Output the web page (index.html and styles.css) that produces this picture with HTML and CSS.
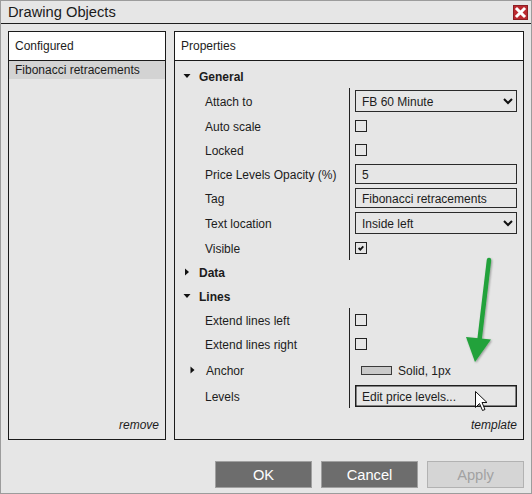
FILE: index.html
```html
<!DOCTYPE html>
<html>
<head>
<meta charset="utf-8">
<link rel="stylesheet" href="styles.css">
</head>
<body>
<div class="window">
  <div class="titlebar">
    <span class="title">Drawing Objects</span>
    <svg class="close" width="15" height="15" viewBox="0 0 15 15">
      <rect x="0.5" y="0.5" width="14" height="14" fill="#bb2a30" stroke="#8c1f24"/>
      <path d="M4 4 L11 11 M11 4 L4 11" stroke="#fff" stroke-width="3" stroke-linecap="square"/>
    </svg>
  </div>
  <div class="content">
    <div class="panels">
      <div class="panel left">
        <div class="panel-head">Configured</div>
        <div class="item selected">Fibonacci retracements</div>
        <div class="panel-foot">remove</div>
      </div>
      <div class="panel right">
        <div class="panel-head">Properties</div>
        <div class="props">
          <div class="ghead"><svg class="tri" width="8" height="8" viewBox="0 0 8 8"><path d="M0.5 2 L7.5 2 L4 6 Z" fill="#111"/></svg><span class="t">General</span></div>
          <div class="group">
            <div class="row h26"><div class="label"><span class="t">Attach to</span></div><div class="value"><div class="box sel"><span class="t">FB 60 Minute</span><svg width="10" height="7" viewBox="0 0 10 7"><path d="M1 1 L5 5 L9 1" fill="none" stroke="#111" stroke-width="2"/></svg></div></div></div>
            <div class="row"><div class="label"><span class="t">Auto scale</span></div><div class="value"><span class="cb"></span></div></div>
            <div class="row"><div class="label"><span class="t">Locked</span></div><div class="value"><span class="cb"></span></div></div>
            <div class="row"><div class="label"><span class="t">Price Levels Opacity (%)</span></div><div class="value"><div class="box inp"><span class="t">5</span></div></div></div>
            <div class="row"><div class="label"><span class="t">Tag</span></div><div class="value"><div class="box inp"><span class="t">Fibonacci retracements</span></div></div></div>
            <div class="row h26"><div class="label"><span class="t">Text location</span></div><div class="value"><div class="box sel"><span class="t">Inside left</span><svg width="10" height="7" viewBox="0 0 10 7"><path d="M1 1 L5 5 L9 1" fill="none" stroke="#111" stroke-width="2"/></svg></div></div></div>
            <div class="row"><div class="label"><span class="t">Visible</span></div><div class="value"><span class="cb"><svg width="10" height="10" viewBox="0 0 10 10"><path d="M2.6 5 L4.3 6.6 L7.3 3.3" fill="none" stroke="#111" stroke-width="1.8"/></svg></span></div></div>
          </div>
          <div class="ghead"><svg class="tri" width="8" height="8" viewBox="0 0 8 8"><path d="M2 0.5 L6 4 L2 7.5 Z" fill="#111"/></svg><span class="t">Data</span></div>
          <div class="ghead"><svg class="tri" width="8" height="8" viewBox="0 0 8 8"><path d="M0.5 2 L7.5 2 L4 6 Z" fill="#111"/></svg><span class="t">Lines</span></div>
          <div class="group">
            <div class="row"><div class="label"><span class="t">Extend lines left</span></div><div class="value"><span class="cb"></span></div></div>
            <div class="row"><div class="label"><span class="t">Extend lines right</span></div><div class="value"><span class="cb"></span></div></div>
            <div class="row h28"><div class="label sub"><svg class="subtri" width="6" height="8" viewBox="0 0 6 8"><path d="M0.5 0.5 L4.5 4 L0.5 7.5 Z" fill="#111"/></svg><span class="t">Anchor</span></div><div class="value"><span class="swatch"></span><span class="t">Solid, 1px</span></div></div>
            <div class="row"><div class="label"><span class="t">Levels</span></div><div class="value"><div class="box btn"><span class="t">Edit price levels...</span></div></div></div>
          </div>
        </div>
        <div class="panel-foot">template</div>
      </div>
    </div>
    <div class="buttons">
      <div class="dbtn">OK</div>
      <div class="dbtn">Cancel</div>
      <div class="dbtn disabled">Apply</div>
    </div>
  </div>
  <svg class="overlay" width="532" height="494" viewBox="0 0 532 494">
    <defs>
      <filter id="soft" x="-20%" y="-20%" width="140%" height="140%">
        <feGaussianBlur in="SourceAlpha" stdDeviation="1.2" result="b"/>
        <feOffset dx="0.5" dy="0.5" result="o"/>
        <feComponentTransfer in="o" result="s"><feFuncA type="linear" slope="0.35"/></feComponentTransfer>
        <feMerge><feMergeNode in="s"/><feMergeNode in="SourceGraphic"/></feMerge>
      </filter>
    </defs>
    <g filter="url(#soft)">
      <path d="M489 260 L479.5 340" stroke="#22a23a" stroke-width="4.5" stroke-linecap="round" fill="none"/>
      <path d="M466 337 L491 339.5 L475 362 Z" fill="#22a23a"/>
    </g>
    <path d="M475.5 391.5 L475.5 407.5 L479.5 403.5 L482.5 410.5 L485 409.5 L482 402.5 L487 402.5 Z" fill="#fff" stroke="#111" stroke-width="1" stroke-linejoin="round"/>
  </svg>
</div>
</body>
</html>
```

FILE: styles.css
```css
html, body {
  margin: 0;
  padding: 0;
}

.window {
  position: relative;
  width: 532px;
  height: 494px;
  box-sizing: border-box;
  border: 1px solid #9c9c9c;
  background: #e6e6e6;
  font-family: "Liberation Sans", Arial, sans-serif;
  color: #1c1c1c;
  font-size: 12px;
}

.t {
  position: relative;
  top: 1px;
}

.titlebar {
  height: 22px;
  border-bottom: 1px solid #1e1e1e;
  display: flex;
  align-items: center;
  justify-content: space-between;
  padding: 0 3px 0 7px;
}

.title {
  font-size: 14.7px;
  color: #1a1a1a;
}

.close {
  display: block;
}

.content {
  padding: 7px 7px 5px 7px;
}

.panels {
  display: flex;
  gap: 8px;
  height: 409px;
}

.panel {
  box-sizing: border-box;
  border: 1px solid #1a1a1a;
  display: flex;
  flex-direction: column;
}

.panel.left {
  width: 158px;
}

.panel.right {
  flex: 1;
}

.panel-head {
  height: 28px;
  background: #fff;
  border-bottom: 1px solid #1a1a1a;
  padding-left: 6px;
  display: flex;
  align-items: center;
  font-size: 12px;
}

.item {
  height: 18px;
  padding-left: 6px;
  display: flex;
  align-items: center;
}

.item.selected {
  background: #d3d3d3;
}

.panel-foot {
  margin-top: auto;
  text-align: right;
  font-style: italic;
  line-height: 14px;
  padding: 0 6px 7px 0;
}

.props {
  padding-top: 3px;
}

.ghead {
  height: 24px;
  display: flex;
  align-items: center;
  padding-left: 8px;
  font-weight: bold;
}

.tri {
  display: block;
  margin-right: 8px;
}

.row {
  display: flex;
  height: 24px;
}

.row.h26 {
  height: 26px;
}

.row.h28 {
  height: 28px;
}

.label {
  width: 175px;
  box-sizing: border-box;
  border-right: 1px solid #222;
  padding-left: 30px;
  display: flex;
  align-items: center;
}

.label.sub {
  padding-left: 15px;
}

.subtri {
  display: block;
  margin-right: 10px;
}

.value {
  flex: 1;
  padding: 0 6px 0 5px;
  display: flex;
  align-items: center;
}

.box {
  box-sizing: border-box;
  width: 100%;
  border: 1px solid #2a2a2a;
  padding-left: 6px;
  display: flex;
  align-items: center;
}

.box.sel {
  height: 22px;
  justify-content: space-between;
  padding-right: 3px;
}

.box.sel svg {
  display: block;
}

.box.inp {
  height: 20px;
}

.box.btn {
  height: 22px;
  border-color: #1e1e1e;
  box-shadow: inset 0 0 0 0.5px #1e1e1e;
}

.cb {
  width: 12px;
  height: 12px;
  box-sizing: border-box;
  border: 1px solid #222;
  display: flex;
  align-items: center;
  justify-content: center;
}

.cb svg {
  display: block;
}

.swatch {
  width: 31px;
  height: 9px;
  box-sizing: border-box;
  border: 1px solid #3a3a3a;
  background: #c9c9c9;
  margin: 0 6px 0 6px;
}

.buttons {
  display: flex;
  justify-content: flex-end;
  gap: 9px;
  margin-top: 21px;
}

.dbtn {
  width: 97px;
  height: 27px;
  box-sizing: border-box;
  background: #6d6d6d;
  border: 1px solid #a0a0a0;
  color: #fff;
  font-size: 14.7px;
  display: flex;
  align-items: center;
  justify-content: center;
}

.dbtn.disabled {
  background: #d5d5d5;
  border-color: #b2b2b2;
  color: #a2a2a2;
}

.overlay {
  position: absolute;
  left: -1px;
  top: -1px;
  pointer-events: none;
}
```
